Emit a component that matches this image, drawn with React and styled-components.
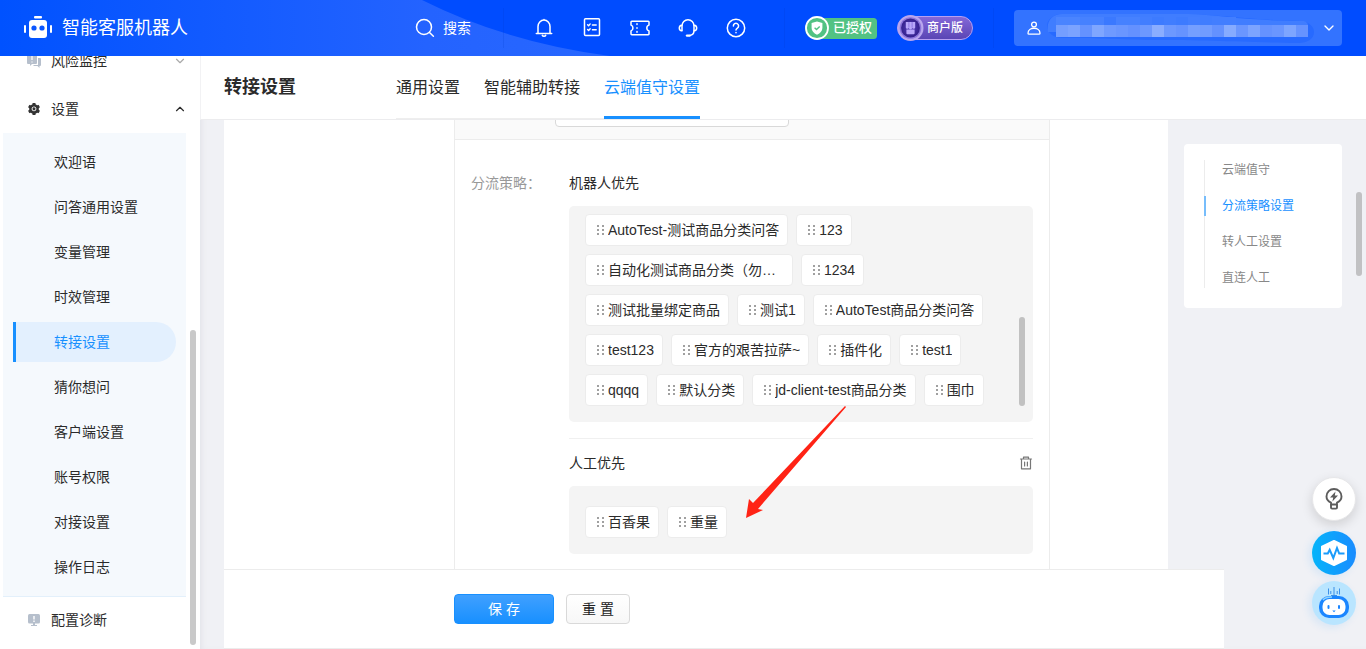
import React from 'react';
import styled, { createGlobalStyle, css } from 'styled-components';
import { ChevronDown, ChevronUp } from 'lucide-react';
import { AiFillSetting } from 'react-icons/ai';

const GlobalStyle = createGlobalStyle`
  * {
    box-sizing: border-box;
  }

  body {
    margin: 0;
    background: #f0f1f5;
    color: #2b2b2b;
    font-family: 'Liberation Sans', 'Noto Sans CJK SC', sans-serif;
    font-size: 14px;
    line-height: 22px;
  }

  button, select {
    font: inherit;
    color: inherit;
  }

  ul, h1, h2 {
    margin: 0;
    padding: 0;
    list-style: none;
  }

  a {
    color: inherit;
    text-decoration: none;
  }

  svg {
    display: block;
    flex: none;
  }
`;

const Page = styled.div`
  display: flex;
  flex-direction: column;
  height: 100vh;
  overflow: hidden;
`;

const Body = styled.div`
  display: flex;
  flex: 1;
  min-height: 0;
`;

/* top bar */

const TopBar = styled.header`
  position: relative;
  display: flex;
  align-items: center;
  height: 56px;
  flex: none;
  padding: 0 24px;
  background: #004cff;
  color: #fff;
`;

const Swoosh = styled.svg`
  position: absolute;
  left: 0;
  top: 0;
`;

const Brand = styled.a`
  position: relative;
  display: flex;
  align-items: center;
  gap: 10px;
  font-size: 18px;
`;

const SearchButton = styled.button`
  position: relative;
  display: flex;
  align-items: center;
  gap: 8px;
  margin-left: auto;
  padding: 0;
  border: none;
  background: none;
  cursor: pointer;
`;

const Separator = styled.span`
  position: relative;
  width: 1px;
  height: 40px;
  margin: 0 ${(props) => props.$after || 0}px 0 ${(props) => props.$before || 0}px;
  background: #0038c830;
`;

const IconGroup = styled.div`
  position: relative;
  display: flex;
  gap: 28px;
`;

const IconButton = styled.button`
  padding: 0;
  border: none;
  background: none;
  color: inherit;
  cursor: pointer;
`;

const Badges = styled.div`
  display: flex;
  align-items: center;
  gap: 20px;
`;

const LicenseBadge = styled.span`
  display: flex;
  align-items: center;
  gap: 4px;
  width: 72px;
  height: 21px;
  border-radius: 12px 4px 4px 12px;
  background: #52c283;
  font-size: 13px;
  font-weight: 500;
  white-space: nowrap;
`;

const EditionBadge = styled.span`
  display: flex;
  align-items: center;
  gap: 3px;
  width: 76px;
  height: 24px;
  border: 1px solid #b7a0f2;
  border-radius: 12px;
  background: linear-gradient(#8468d8, #5a45b4);
  font-size: 12px;
  font-weight: 500;
  white-space: nowrap;

  svg {
    margin-left: -1px;
  }
`;

const Account = styled.button`
  display: flex;
  align-items: center;
  gap: 6px;
  width: 328px;
  height: 36px;
  padding: 0 12px 0 13px;
  border: none;
  border-radius: 4px;
  background: #3373ff;
  color: #fff;
  cursor: pointer;
`;

/* side menu */

const Sidebar = styled.aside`
  position: relative;
  display: flex;
  width: 200px;
  flex: none;
  overflow: hidden;
  background: #fff;
`;

const Menu = styled.nav`
  flex: 1;
  margin-top: -19px;
  padding-left: 3px;
`;

const MenuHead = styled.button`
  display: flex;
  align-items: center;
  width: 100%;
  height: ${(props) => (props.$last ? 46 : 48)}px;
  padding: 0 0 0 24px;
  border: none;
  background: none;
  text-align: left;
  cursor: pointer;

  span {
    flex: 1;
    margin-left: 10px;
  }

  svg:last-child {
    margin-right: -1px;
  }
`;

const SubMenu = styled.ul`
  display: flex;
  flex-direction: column;
  gap: 5px;
  padding: 9px 10px;
  border-bottom: 1px solid #e3f0fb;
  background: #f5f9fd;
`;

const SubItem = styled.a`
  display: block;
  padding-left: 38px;
  border-left: 3px solid transparent;
  border-radius: 0 20px 20px 0;
  line-height: 40px;

  ${(props) =>
    props.$active &&
    css`
      border-left-color: #1890ff;
      background: #e3f0fe;
      color: #1890ff;
    `}
`;

const SideThumb = styled.div`
  align-self: flex-end;
  width: 6px;
  height: 315px;
  margin: 4px;
  border-radius: 3px;
  background: #c9c9c9;
`;

/* main area */

const Main = styled.main`
  position: relative;
  display: flex;
  flex-direction: column;
  flex: 1;
  min-width: 0;
  box-shadow: inset 4px 0 6px -3px #dfe0e6;
`;

const PageHead = styled.div`
  display: flex;
  height: 64px;
  flex: none;
  padding-left: 23px;
  border-bottom: 1px solid #ececee;
  border-left: 1px solid #f2f2f4;
  background: #fff;
`;

const Title = styled.h1`
  width: 172px;
  font-size: 18px;
  line-height: 62px;
`;

const Tabs = styled.nav`
  display: flex;
  gap: 24px;
  border-bottom: 1px solid #eee;
`;

const Tab = styled.a`
  margin-bottom: -1px;
  padding-top: 2px;
  border-bottom: 3px solid transparent;
  font-size: 16px;
  line-height: 59px;

  ${(props) =>
    props.$active &&
    css`
      border-bottom-color: #1890ff;
      color: #1890ff;
    `}
`;

const Content = styled.div`
  display: flex;
  align-items: flex-start;
  gap: 16px;
  flex: 1;
  min-height: 0;
  overflow: hidden;
  padding: 0 24px;
`;

const Panel = styled.section`
  display: flex;
  align-self: stretch;
  flex: 1;
  padding-left: 230px;
  background: #fff;
`;

const Form = styled.div`
  flex: 0 1 596px;
  border: solid #ececec;
  border-width: 0 1px;
`;

const FilterBar = styled.div`
  display: flex;
  align-items: flex-end;
  height: 20px;
  overflow: hidden;
  padding: 0 0 12px 100px;
  border-bottom: 1px solid #ececec;
  background: #fafafa;
`;

const FilterSelect = styled.select`
  width: 234px;
  height: 32px;
  flex: none;
  appearance: none;
  border: 1px solid #d9d9d9;
  border-radius: 4px;
  background: #fff;
`;

const Row = styled.div`
  display: flex;
  padding: 32px 16px 0;
`;

const Label = styled.div`
  width: 98px;
  flex: none;
  color: #999;
`;

const Field = styled.div`
  flex: 1;
`;

const GroupHead = styled.div`
  display: flex;
  align-items: center;
  justify-content: space-between;
  margin-bottom: 12px;

  h2 {
    font-size: 14px;
    font-weight: 400;
  }
`;

const Group = styled.section`
  & + & {
    margin-top: 16px;
    padding-top: 13px;
    border-top: 1px solid #f0f0f0;
  }
`;

const ChipBox = styled.div`
  position: relative;
  display: flex;
  gap: 8px;
  padding: ${(props) => props.$top}px 8px 16px 16px;
  border-radius: 5px;
  background: #f4f4f4;
`;

const ChipList = styled.ul`
  display: flex;
  flex-wrap: wrap;
  flex: 1;
  gap: 8px;
`;

const ChipItem = styled.li`
  display: flex;
  align-items: center;
  height: 32px;
  padding: 0 8px 0 11px;
  border: 1px solid #ececec;
  border-radius: 4px;
  background: #fff;
  cursor: move;

  span {
    max-width: 176px;
    overflow: hidden;
    text-overflow: ellipsis;
    white-space: nowrap;
  }
`;

const ChipThumb = styled.div`
  align-self: flex-end;
  width: 6px;
  height: 89px;
  border-radius: 3px;
  background: #c1c1c1;
`;

const Arrow = styled.svg`
  position: absolute;
  left: 177px;
  top: 200px;
  z-index: 1;
  pointer-events: none;
`;

const Anchors = styled.nav`
  width: 158px;
  flex: none;
  margin-top: 24px;
  padding: 16px 20px 20px;
  border-radius: 4px;
  background: #fff;
`;

const AnchorList = styled.ul`
  display: flex;
  flex-direction: column;
  gap: 16px;
  border-left: 1px solid #ececec;
  color: #888;
  font-size: 12px;
  line-height: 20px;
`;

const AnchorLink = styled.a`
  display: block;
  margin-left: -1px;
  padding-left: 16px;
  border-left: 2px solid transparent;

  ${(props) =>
    props.$active &&
    css`
      border-left-color: #77bdfb;
      color: #1890ff;
    `}
`;

const PageThumb = styled.div`
  position: absolute;
  right: 4px;
  top: 136px;
  width: 6px;
  height: 84px;
  border-radius: 3px;
  background: #c1c1c3;
`;

const Footer = styled.footer`
  display: flex;
  gap: 12px;
  height: 80px;
  flex: none;
  margin: 0 142px 0 24px;
  padding: 24px 0 0 230px;
  border: solid #ececec;
  border-width: 1px 0;
  background: #fff;
`;

const Button = styled.button`
  width: ${(props) => (props.$primary ? 100 : 64)}px;
  height: 30px;
  padding: 0;
  border: 1px solid ${(props) => (props.$primary ? '#1890ff' : '#d9d9d9')};
  border-radius: 4px;
  background: ${(props) =>
    props.$primary
      ? 'linear-gradient(#40a0ff, #1890ff)'
      : 'linear-gradient(#fff, #f7f7f7)'};
  color: ${(props) => (props.$primary ? '#fff' : '#222')};
  cursor: pointer;
`;

const FloatBar = styled.div`
  position: fixed;
  right: 10px;
  bottom: 24px;
  display: flex;
  flex-direction: column;
`;

const FloatButton = styled.button`
  display: flex;
  align-items: center;
  justify-content: center;
  width: 44px;
  height: 44px;
  margin-top: ${(props) => props.$gap || 0}px;
  padding: 0;
  border: ${(props) => (props.$ring ? '1px solid #e6e6e8' : 'none')};
  border-radius: 50%;
  background: ${(props) => props.$fill};
  box-shadow: ${(props) =>
    props.$ring ? '0 4px 12px #00000024' : '-3px 2px 8px #1890ff1f'};
  cursor: pointer;
`;

const menuItems = [
  '欢迎语',
  '问答通用设置',
  '变量管理',
  '时效管理',
  '转接设置',
  '猜你想问',
  '客户端设置',
  '账号权限',
  '对接设置',
  '操作日志',
];

const tabs = ['通用设置', '智能辅助转接', '云端值守设置'];

const anchors = ['云端值守', '分流策略设置', '转人工设置', '直连人工'];

const robotFirst = [
  'AutoTest-测试商品分类问答',
  '123',
  '自动化测试商品分类（勿动）',
  '1234',
  '测试批量绑定商品',
  '测试1',
  'AutoTest商品分类问答',
  'test123',
  '官方的艰苦拉萨~',
  '插件化',
  'test1',
  'qqqq',
  '默认分类',
  'jd-client-test商品分类',
  '围巾',
];

const humanFirst = ['百香果', '重量'];

const LogoIcon = () => (
  <svg width="28" height="24" viewBox="0 0 28 24" fill="#fff">
    <rect x="10" y="0" width="8" height="2.5" rx="1" />
    <rect x="5" y="4" width="18" height="18" rx="3" />
    <rect x="0" y="9" width="2" height="8" rx="1" />
    <rect x="26" y="9" width="2" height="8" rx="1" />
    <circle cx="10" cy="12" r="2.6" fill="#0a56ff" />
    <circle cx="18" cy="12" r="2.6" fill="#0a56ff" />
  </svg>
);

const Line = ({ children, size = 20, width = 1.5, color = 'currentColor' }) => (
  <svg
    width={size}
    height={size}
    viewBox={`0 0 ${size} ${size}`}
    fill="none"
    stroke={color}
    strokeWidth={width}
    strokeLinecap="round"
    strokeLinejoin="round"
  >
    {children}
  </svg>
);

const SearchIcon = () => (
  <Line>
    <circle cx="9" cy="9" r="7.5" />
    <path d="M14.5 14.5 18.4 18.2" />
  </Line>
);

const BellIcon = () => (
  <Line>
    <path d="M2.3 15.6h15.4M4 15.500V8.500a6 6.500 0 0 1 12 0v7M10 2V1.500M8.300 17.400c.5 1.200 2.900 1.200 3.400 0" />
  </Line>
);

const TaskIcon = () => (
  <Line>
    <rect x="2.500" y="0.800" width="15" height="16.700" rx="1" />
    <path d="m5.600 6.700 1 1 1.600-1.800M10.400 7h3.800M5.600 11.500l1 1 1.600-1.800M10.400 11.800h3.800" strokeWidth="1.400" />
  </Line>
);

const TicketIcon = () => (
  <Line>
    <path d="M1.800 3.200h16.400a.8.8 0 0 1 .8.800v3.100c-2.900.8-2.900 5 0 5.800V16a.8.8 0 0 1-.8.800H1.800A.8.8 0 0 1 1 16v-3.100c2.600-.8 2.600-5 0-5.800V4a.8.8 0 0 1 .8-.800z" />
    <path d="M7 5.800v.6M7 9.700v.6M7 13.600v.6" />
  </Line>
);

const HeadsetIcon = () => (
  <Line>
    <path d="M4 12.600V8a6 6.300 0 0 1 12 0v4.600c0 2.600-1.600 4.600-4.200 4.800" />
    <path d="M3.800 7.200C2.200 7.400 1.300 8.400 1.300 10s.9 2.600 2.500 2.800M16.200 7.200c1.600.2 2.500 1.200 2.500 2.800s-.9 2.600-2.500 2.800" />
    <path d="M9 17.600h2.600" strokeWidth="2.400" />
  </Line>
);

const HelpIcon = () => (
  <Line>
    <circle cx="10" cy="10" r="8.700" />
    <path d="M7.400 8a2.600 2.600 0 1 1 4 2.100c-.9.600-1.400 1-1.400 2M10 14.600v.1" />
  </Line>
);

const ShieldIcon = () => (
  <svg width="24" height="24" viewBox="0 0 24 24">
    <circle cx="12" cy="12" r="11" fill="#52c283" stroke="#fff" strokeWidth="1.800" />
    <path d="M12 5.600 17.400 7v5c0 3-2 5-5.400 6.800C8.600 17 6.600 15 6.600 12V7z" fill="#fff" />
    <path d="m9.600 11.800 1.900 1.800 3.200-3.200" fill="none" stroke="#52c283" strokeWidth="1.400" />
  </svg>
);

const ShopIcon = () => (
  <svg width="27" height="28" viewBox="0 0 27 28">
    <defs>
      <radialGradient id="shop">
        <stop offset="0" stopColor="#5a42be" />
        <stop offset="1" stopColor="#34208c" />
      </radialGradient>
    </defs>
    <circle cx="13.500" cy="14" r="13" fill="#b9a6ee" />
    <circle cx="13.500" cy="14" r="10.800" fill="#8a72da" />
    <circle cx="13.500" cy="14" r="9.400" fill="url(#shop)" />
    <path d="M8.800 8h9.400v5.400a1.600 1.600 0 0 1-3.100.4 1.600 1.600 0 0 1-3.200 0 1.600 1.600 0 0 1-3.100-.4z" fill="#b8a6fa" />
    <path d="M9.400 15.400h8.200v3.800a1 1 0 0 1-1 1h-6.200a1 1 0 0 1-1-1z" fill="#b8a6fa" />
    <path d="M11.900 8v5.500M15.100 8v5.500" stroke="#8f79e2" />
  </svg>
);

const UserIcon = () => (
  <Line size={14} width={1.3}>
    <circle cx="7" cy="3.500" r="2.400" />
    <path d="M1 12.200c0-6.600 12-6.600 12 0 0 .7-.3 1-1 1H2c-.7 0-1-.3-1-1z" />
  </Line>
);

/* blurred-out account name */
const mosaicTop = ['#4a84ff', '#4a84ff', '#4681ff', '#4681ff', '#3b79ff', '#4681ff', '#4681ff', '#427eff', '#3d7bff', '#407dff', '#3d7bff', '#427eff', '#407dff', '#427eff', '#427eff'];
const mosaic = ['#749eff', '#7ba3ff', '#6492ff', '#7fa6ff', '#6f9aff', '#6a96ff', '#6491ff', '#6c98ff', '#8aadff', '#6c98ff', '#6693ff', '#759fff', '#719cff', '#6391ff', '#86abff', '#6a96ff', '#7ca4ff', '#6592ff', '#6a96ff', '#7da5ff', '#6693ff'];

const MaskedName = () => (
  <svg width="268" height="32" viewBox="0 0 268 32">
    <path d="M15 2h118c50 1 70 6 120 7 9 1 14 5 14 11 0 7-7 11-15 11-60-1-90-3-150-3-40-1-50-2-87-2C6 26 0 20 0 14S6 2 15 2z" fill="#276aff" />
    <path d="M15 2h118c22 0 38 2 56 4 26 2 46 3 66 3 4 0 6 2 6 5v6H1C-1 8 6 2 15 2z" fill="#407dff" />
    {mosaicTop.map((color, i) => (
      <rect key={i} x={9 + i * 12} y="5" width="12" height="9" fill={color} />
    ))}
    {mosaic.map((color, i) => (
      <rect key={i} x={9 + i * 12} y="13" width="12" height="12" fill={color} />
    ))}
  </svg>
);

const RiskIcon = () => (
  <svg width="14" height="14" viewBox="0 0 14 14" fill="#b6bfcc">
    <path d="M1 0h8a1 1 0 0 1 1 1v8a1 1 0 0 1-1 1H5l-2 2v-2H1a1 1 0 0 1-1-1V1a1 1 0 0 1 1-1z" />
    <path d="M11 4h2a1 1 0 0 1 1 1v6a1 1 0 0 1-1 1h-.5v2l-2-2H6l1-1h4z" />
    <path d="M5 2v4M5 7.400v1" stroke="#fff" strokeWidth="1.200" />
  </svg>
);

const DiagnoseIcon = () => (
  <svg width="14" height="14" viewBox="0 0 14 14" fill="#b6bfcc">
    <rect x="1" y="1" width="12" height="9.500" rx="1.500" />
    <path d="M6 10h2v2h2v1H4v-1h2z" />
    <path d="M7 3v3.500M7 7.500V9" stroke="#fff" strokeWidth="1.400" />
  </svg>
);

const TrashIcon = () => (
  <Line size={14} width={1.2} color="#777">
    <path d="M1.500 3h11M4.500 3V1.200h5V3M2.500 3v9.800h9V3M5.600 6v4M8.400 6v4" />
  </Line>
);

const BulbIcon = () => (
  <svg width="18" height="22" viewBox="0 0 18 22" fill="none" stroke="#5c5c5c" strokeWidth="1.900" strokeLinejoin="round">
    <path d="M6 16.500v-1.800C3.200 13.400 1.500 11.200 1.500 8.500a7.500 7.500 0 0 1 15 0c0 2.700-1.700 4.900-4.500 6.200v1.800z" />
    <path d="M6 16.500v3c0 .7.400 1.100 1.100 1.100h3.800c.7 0 1.100-.4 1.100-1.100v-3" />
    <path d="M10.500 3.600 5 9.400h3.200l-.8 4 5.600-5.800H9.800z" fill="#5c5c5c" stroke="none" />
  </svg>
);

const PulseIcon = () => (
  <svg width="28" height="28" viewBox="0 0 28 28">
    <path d="M14 2 26 7.600v12.800L14 26 2 20.400V7.600z" fill="#fff" stroke="#fff" strokeWidth="2" strokeLinejoin="round" />
    <path d="M3.500 14.500h4.300l1.900-3.700 3.600 8.200L17 9l2.200 5.500H24.500" fill="none" stroke="#1a9cfb" strokeWidth="2" />
  </svg>
);

const RobotIcon = () => (
  <svg width="32" height="34" viewBox="0 0 32 34">
    <path d="M10.500 2.500v6M12.800 5v3M16 1v8M19.200 5v3M21.500 2.500v6M13 9.500h6" stroke="#3b8fe8" fill="none" />
    <rect x="1" y="10" width="30" height="22" rx="10" fill="#1b86ff" />
    <path d="M5 14c2-2.600 5-3 9-3" stroke="#8fd4ff" strokeWidth="1.400" fill="none" />
    <rect x="4.500" y="13" width="23" height="16" rx="7" fill="#fff" />
    <rect x="9.500" y="19" width="2" height="4" rx="1" fill="#1b86ff" />
    <rect x="20" y="19" width="2" height="4" rx="1" fill="#1b86ff" />
    <path d="M14.300 24.500h3.400L16 26.300z" fill="#1b86ff" />
  </svg>
);

const DragDots = () => (
  <svg width="11" height="12" viewBox="0 0 11 12" fill="#a0a0a0">
    {[0, 4, 8].map((y) => (
      <React.Fragment key={y}>
        <rect x="0" y={y + 1} width="2" height="2" />
        <rect x="5" y={y + 1} width="2" height="2" />
      </React.Fragment>
    ))}
  </svg>
);

const Chips = ({ items }) => (
  <ChipList>
    {items.map((name) => (
      <ChipItem key={name} draggable>
        <DragDots />
        <span>{name}</span>
      </ChipItem>
    ))}
  </ChipList>
);

const TopNav = () => (
  <TopBar>
    <Swoosh width="610" height="56" viewBox="0 0 610 56">
      <defs>
        <linearGradient id="bar">
          <stop offset="0" stopColor="#0052ff" />
          <stop offset="0.700" stopColor="#2463ff" />
          <stop offset="1" stopColor="#2867ff" />
        </linearGradient>
      </defs>
      <path d="M0 0h422q85 42.600 188 56H0z" fill="url(#bar)" />
    </Swoosh>
    <Brand href="#">
      <LogoIcon />
      智能客服机器人
    </Brand>
    <SearchButton>
      <SearchIcon />
      搜索
    </SearchButton>
    <Separator $before={32} $after={30} />
    <IconGroup>
      <IconButton aria-label="通知"><BellIcon /></IconButton>
      <IconButton aria-label="任务"><TaskIcon /></IconButton>
      <IconButton aria-label="卡券"><TicketIcon /></IconButton>
      <IconButton aria-label="客服"><HeadsetIcon /></IconButton>
      <IconButton aria-label="帮助"><HelpIcon /></IconButton>
    </IconGroup>
    <Separator $before={38} $after={20} />
    <Badges>
      <LicenseBadge>
        <ShieldIcon />
        已授权
      </LicenseBadge>
      <EditionBadge>
        <ShopIcon />
        商户版
      </EditionBadge>
    </Badges>
    <Separator $before={20} $after={20} />
    <Account aria-label="账号">
      <UserIcon />
      <MaskedName />
      <ChevronDown size={16} strokeWidth={2} />
    </Account>
  </TopBar>
);

const SideMenu = () => (
  <Sidebar>
    <Menu>
      <MenuHead>
        <RiskIcon />
        <span>风险监控</span>
        <ChevronDown size={14} color="#aaa" />
      </MenuHead>
      <MenuHead>
        <AiFillSetting size={14} color="#333" />
        <span>设置</span>
        <ChevronUp size={14} />
      </MenuHead>
      <SubMenu>
        {menuItems.map((item) => (
          <li key={item}>
            <SubItem href="#" $active={item === '转接设置'}>
              {item}
            </SubItem>
          </li>
        ))}
      </SubMenu>
      <MenuHead $last>
        <DiagnoseIcon />
        <span>配置诊断</span>
      </MenuHead>
    </Menu>
    <SideThumb />
  </Sidebar>
);

const Strategy = () => (
  <Row>
    <Label>分流策略：</Label>
    <Field>
      <Group>
        <GroupHead>
          <h2>机器人优先</h2>
        </GroupHead>
        <ChipBox $top={8}>
          <Chips items={robotFirst} />
          <ChipThumb />
          <Arrow width="101" height="112" viewBox="0 0 101 112">
            <path d="M99 0 7 97 3 93 0 112 17 104 12 103 100 1z" fill="#ff2315" />
          </Arrow>
        </ChipBox>
      </Group>
      <Group>
        <GroupHead>
          <h2>人工优先</h2>
          <IconButton aria-label="删除"><TrashIcon /></IconButton>
        </GroupHead>
        <ChipBox $top={20}>
          <Chips items={humanFirst} />
        </ChipBox>
      </Group>
    </Field>
  </Row>
);

const App = () => (
  <Page>
    <GlobalStyle />
    <TopNav />
    <Body>
      <SideMenu />
      <Main>
        <PageHead>
          <Title>转接设置</Title>
          <Tabs>
            {tabs.map((tab) => (
              <Tab key={tab} href="#" $active={tab === '云端值守设置'}>
                {tab}
              </Tab>
            ))}
          </Tabs>
        </PageHead>
        <Content>
          <Panel>
            <Form>
              <FilterBar>
                <FilterSelect aria-label="筛选" />
              </FilterBar>
              <Strategy />
            </Form>
          </Panel>
          <Anchors>
            <AnchorList>
              {anchors.map((anchor) => (
                <li key={anchor}>
                  <AnchorLink href="#" $active={anchor === '分流策略设置'}>
                    {anchor}
                  </AnchorLink>
                </li>
              ))}
            </AnchorList>
          </Anchors>
        </Content>
        <Footer>
          <Button $primary>保 存</Button>
          <Button>重 置</Button>
        </Footer>
        <PageThumb />
      </Main>
    </Body>
    <FloatBar>
      <FloatButton $ring $fill="#fff" aria-label="建议"><BulbIcon /></FloatButton>
      <FloatButton $gap={10} $fill="linear-gradient(90deg, #04b4fa, #1a8cff)" aria-label="诊断"><PulseIcon /></FloatButton>
      <FloatButton $gap={6} $fill="#b9e5ff" aria-label="机器人"><RobotIcon /></FloatButton>
    </FloatBar>
  </Page>
);

export default App;
